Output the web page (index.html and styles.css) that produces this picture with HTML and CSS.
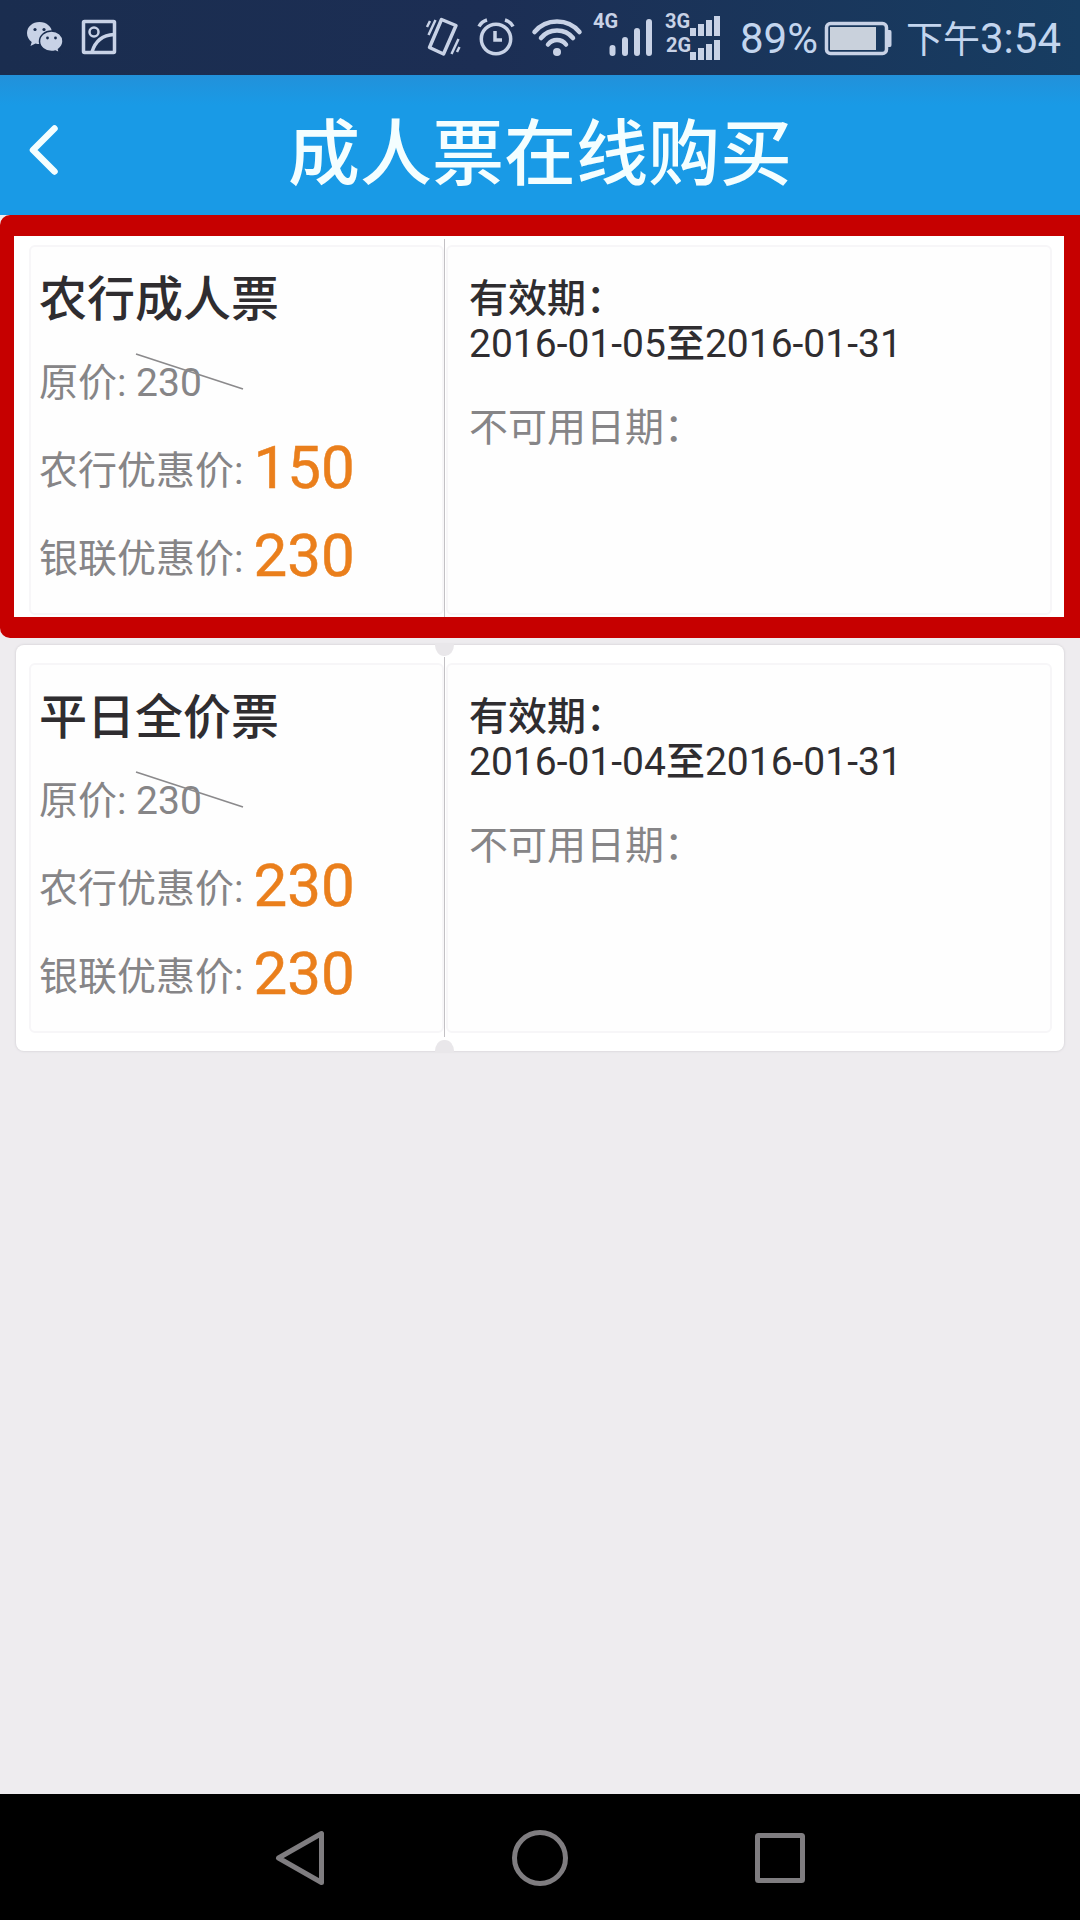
FILE: index.html
```html
<!DOCTYPE html>
<html lang="zh-CN">
<head>
    <meta charset="UTF-8">
    <meta name="viewport" content="width=device-width, initial-scale=1.0">
    <title>成人票在线购买</title>
    <link rel="stylesheet" href="styles.css">
</head>
<body>
    <div class="statusbar">
        <div class="notifications">
            <svg width="38" height="75" viewBox="0 0 38 75">
                <path class="fill" d="M13.500 22C6.500 22 1 26.700 1 33c0 3.700 1.800 6.800 4.700 8.900L4.500 46l5-2.500c1.300.4 2.600.5 4 .5C20.500 44 26 39.300 26 33s-5.500-11-12.500-11z"/>
                <path class="bubble" d="M25.500 31C18.900 31 13.500 35.500 13.500 41.300s5.400 10.300 12 10.300c1.400 0 2.700-.2 3.900-.6l4.100 2-1-3.700c2.700-1.900 4.500-4.700 4.500-8C37 35.500 32.100 31 25.500 31z"/>
                <circle class="dot" cx="9" cy="29.500" r="1.600"/>
                <circle class="dot" cx="18" cy="29.500" r="1.600"/>
                <circle class="dot" cx="21.500" cy="38" r="1.400"/>
                <circle class="dot" cx="29.500" cy="38" r="1.400"/>
            </svg>
            <svg width="34" height="75" viewBox="0 0 34 75">
                <rect class="line" x="1.500" y="21.500" width="31" height="31" rx="1"/>
                <circle class="line thin" cx="12" cy="32" r="4.500"/>
                <path class="line" d="M10 52c3-10 10-17 22-17.500"/>
            </svg>
        </div>
        <div class="system">
            <svg width="36" height="75" viewBox="0 0 36 75">
                <path class="line phone" d="M16.500 19.500L31 25.500 18.500 54 4.500 47.500z"/>
                <path class="line thin" d="M2 27l3-6M3.500 35l7-15M26.500 54l7-15M32 52l2.500-5"/>
            </svg>
            <svg class="alarm" width="38" height="75" viewBox="0 0 38 75">
                <circle class="line" cx="19" cy="39" r="14.700"/>
                <path class="line" d="M2 26.500c1.500-3 4.500-5.500 8-6.500M28 20c3.500 1 6.500 3.500 8 6.500M18 31v9h7"/>
            </svg>
            <svg class="wifi" width="52" height="75" viewBox="0 0 52 75">
                <path class="line wide" d="M3.500 32C15 18 37 18 48.500 32M10 38C18 28 34 28 42 38M17 44.500c4.500-6 13.500-6 18 0"/>
                <circle class="fill" cx="26" cy="52" r="4"/>
            </svg>
            <svg class="signal" width="60" height="75" viewBox="0 0 60 75">
                <text x="-1" y="27.500">4G</text>
                <path class="bar" d="M18.500 48v5M31 40v13M43 31v22M55 22v31"/>
            </svg>
            <svg class="signal" width="58" height="75" viewBox="0 0 58 75">
                <text x="0" y="27.500">3G</text>
                <text x="1" y="51.500">2G</text>
                <path class="fill" d="M25 28h6v8h-6zM33 24h6v12h-6zM41 20h6v16h-6zM49 16h6v20h-6zM25 52h6v8h-6zM33 48h6v12h-6zM41 44h6v16h-6zM49 40h6v20h-6z"/>
            </svg>
            <span class="percent">89%</span>
            <svg class="battery" width="68" height="75" viewBox="0 0 68 75">
                <rect class="line" x="1.500" y="23.500" width="60" height="30" rx="4"/>
                <rect class="charge" x="5" y="27" width="46" height="23"/>
                <path class="fill" d="M63 30h2q1.500 0 1.500 2v13q0 2-1.500 2h-2z"/>
            </svg>
            <span class="clock"><span class="ampm">下午</span>3:54</span>
        </div>
    </div>

    <div class="header">
        <svg class="back" width="30" height="52" viewBox="0 0 30 52">
            <path d="M25.500 4.500L4 26l21.500 21.500"/>
        </svg>
        <h1>成人票在线购买</h1>
    </div>

    <div class="content">
        <div class="ticket selected">
            <div class="prices">
                <h2>农行成人票</h2>
                <div class="row original">
                    <span>原价: 230</span>
                    <svg class="strike" width="110" height="38" viewBox="0 0 110 38"><path d="M1 1l107 35"/></svg>
                </div>
                <div class="row"><span class="label">农行优惠价:</span><span class="price">150</span></div>
                <div class="row"><span class="label">银联优惠价:</span><span class="price">230</span></div>
            </div>
            <div class="dates">
                <p class="valid"><b>有效期：</b><br>2016-01-05<b>至</b>2016-01-31</p>
                <p class="invalid">不可用日期：</p>
            </div>
        </div>
        <div class="ticket">
            <div class="prices">
                <h2>平日全价票</h2>
                <div class="row original">
                    <span>原价: 230</span>
                    <svg class="strike" width="110" height="38" viewBox="0 0 110 38"><path d="M1 1l107 35"/></svg>
                </div>
                <div class="row"><span class="label">农行优惠价:</span><span class="price">230</span></div>
                <div class="row"><span class="label">银联优惠价:</span><span class="price">230</span></div>
            </div>
            <div class="dates">
                <p class="valid"><b>有效期：</b><br>2016-01-04<b>至</b>2016-01-31</p>
                <p class="invalid">不可用日期：</p>
            </div>
        </div>
        <div class="highlight"></div>
    </div>

    <div class="navbar">
        <svg width="60" height="60" viewBox="0 0 60 60"><path d="M8.500 30L51.500 5.500v49z"/></svg>
        <svg width="60" height="60" viewBox="0 0 60 60"><circle cx="30" cy="30" r="25.500"/></svg>
        <svg width="60" height="60" viewBox="0 0 60 60"><rect x="7.500" y="7.500" width="45" height="45" rx="1"/></svg>
    </div>
</body>
</html>
```

FILE: styles.css
```css
* {
    box-sizing: border-box;
}
body {
    font-family: Roboto, "Noto Sans CJK SC", sans-serif;
    margin: 0;
    width: 1080px;
    height: 1920px;
    overflow: hidden;
    display: flex;
    flex-direction: column;
    background-color: #eeecef;
}
svg {
    display: block;
    flex: none;
    overflow: visible;
}

/* status bar */
.statusbar {
    display: flex;
    justify-content: space-between;
    height: 75px;
    padding: 0 19px 0 26px;
    background: linear-gradient(to right, #1a2d4f, #1c2e54 45%, #173d62);
    color: #c3d5ee;
}
.notifications,
.system {
    display: flex;
}
.notifications {
    gap: 18px;
}
.fill {
    fill: #c8d2e6;
}
.bubble {
    fill: #c8d2e6;
    stroke: #1a2d4f;
    stroke-width: 1.5;
}
.dot {
    fill: #1a2d4f;
}
.line {
    fill: none;
    stroke: #c8d2e6;
    stroke-width: 3.5;
}
.thin {
    stroke-width: 2.5;
}
.phone {
    stroke-width: 3.5;
    stroke-linejoin: round;
}
.wide {
    stroke-width: 4.5;
    stroke-linecap: round;
}
.bar {
    stroke: #c8d2e6;
    stroke-width: 6;
    stroke-linecap: round;
}
.charge {
    fill: #c9d1dc;
}
.signal text {
    font-size: 20px;
    font-weight: 700;
    fill: #c8d2e6;
}
.alarm {
    margin-left: 16px;
}
.wifi {
    margin-left: 16px;
}
.signal {
    margin-left: 11px;
}
.percent,
.clock {
    font-size: 42px;
    line-height: 78px;
    white-space: nowrap;
}
.percent {
    margin-left: 17px;
    width: 85px;
}
.clock {
    margin-left: 13px;
}
.ampm {
    font-size: 37px;
}

/* title bar */
.header {
    display: flex;
    align-items: center;
    height: 140px;
    padding: 10px 29px 0;
    background: linear-gradient(#2291da, #199ae6 30px);
}
.back path {
    fill: none;
    stroke: #f4feff;
    stroke-width: 6.5;
    stroke-linecap: round;
    stroke-linejoin: round;
}
.header h1 {
    flex: 1;
    margin: 0 30px 0 0;
    padding-top: 10px;
    text-align: center;
    font-size: 72px;
    font-weight: 500;
    line-height: 120px;
    color: #f4feff;
}

/* tickets */
.content {
    position: relative;
    flex: 1;
    display: flex;
    flex-direction: column;
    gap: 12px;
    padding: 12px 16px;
}
.ticket {
    position: relative;
    display: grid;
    grid-template-columns: 428px 1fr;
    height: 406px;
    background-color: #fff;
    border-radius: 8px;
    box-shadow: 0 0 2px 1px #dddbdf;
}
/* notches at both ends of the tear line */
.ticket::before,
.ticket::after {
    content: "";
    position: absolute;
    left: 419px;
    width: 19px;
    height: 13px;
    background-color: #e9e7ea;
}
.ticket::before {
    top: -2px;
    border-radius: 3px 3px 9px 9px / 2px 2px 11px 11px;
}
.ticket::after {
    bottom: -2px;
    border-radius: 9px 9px 3px 3px / 11px 11px 2px 2px;
}
.selected {
    box-shadow: 0 0 0 4px #fff;
}
.selected::before,
.selected::after {
    display: none;
}
.prices,
.dates {
    margin: 18px 0;
    border: 2px solid #f7f6f8;
    border-radius: 6px;
    background-color: #fefefe;
}
.prices {
    position: relative;
    margin-left: 13px;
    padding: 11px 0 0 8px;
}
.prices::after {
    content: "";
    position: absolute;
    top: -8px;
    bottom: -6px;
    right: -3px;
    width: 1px;
    background-color: #c3c1c5;
}
.dates {
    margin-right: 12px;
    margin-left: 2px;
    padding: 30px 0 0 21px;
}
.ticket h2 {
    margin: 0;
    font-size: 48px;
    font-weight: 500;
    line-height: 84px;
    color: #2f2d30;
}
.row {
    display: flex;
    align-items: center;
    height: 88px;
    font-size: 39px;
    line-height: 88px;
    color: #868587;
}
.original {
    height: 82px;
    line-height: 82px;
    position: relative;
}
.label {
    padding-top: 5px;
}
.strike {
    position: absolute;
    left: 96px;
    top: 11px;
}
.strike path {
    stroke: #8b8a8c;
    stroke-width: 1.7;
}
.price {
    margin-left: 10px;
    font-size: 60px;
    color: #ea7f1c;
    -webkit-text-stroke: 0.5px #ea7f1c;
}
.dates p {
    margin: 0;
    font-size: 39px;
    line-height: 45px;
    color: #2f2d30;
}
.dates b {
    font-weight: 500;
}
.dates .invalid {
    margin-top: 39px;
    color: #868587;
}
.highlight {
    position: absolute;
    top: 0;
    left: 0;
    width: 1084px;
    height: 423px;
    border: 21px solid #c60000;
    border-left-width: 14px;
    border-right-width: 20px;
    border-radius: 10px 0 0 10px;
}

/* system navigation */
.navbar {
    display: flex;
    justify-content: center;
    align-items: center;
    gap: 180px;
    height: 126px;
    padding-top: 2px;
    background-color: #000;
}
.navbar svg {
    fill: none;
    stroke: #7f7d80;
    stroke-width: 5;
    stroke-linejoin: round;
}
```
